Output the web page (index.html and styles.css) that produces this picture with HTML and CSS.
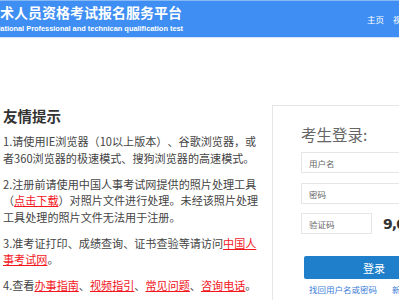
FILE: index.html
```html
<!DOCTYPE html>
<html lang="zh-CN">
<head>
	<meta charset="UTF-8">
	<meta name="viewport" content="width=device-width, initial-scale=1.0">
	<title>专业技术人员资格考试报名服务平台</title>
	<link rel="stylesheet" href="styles.css">
</head>
<body>
	<div class="header">
		<div class="brand">
			<h1 class="brandTitle">术人员资格考试报名服务平台</h1>
			<p class="brandSub">National Professional and technican qualification test</p>
		</div>
		<div class="nav">
			<a href="#">主页</a>
			<a href="#">视频指引</a>
			<a href="#">常见问题</a>
		</div>
	</div>

	<div class="main">
		<div class="tips">
			<h2>友情提示</h2>
			<p>1.请使用IE浏览器（10以上版本）、谷歌浏览器，或者360浏览器的极速模式、搜狗浏览器的高速模式。</p>
			<p>2.注册前请使用中国人事考试网提供的照片处理工具（<a href="#">点击下载</a>）对照片文件进行处理。未经该照片处理工具处理的照片文件无法用于注册。</p>
			<p>3.准考证打印、成绩查询、证书查验等请访问<a href="#">中国人事考试网</a>。</p>
			<p>4.查看<a href="#">办事指南</a>、<a href="#">视频指引</a>、<a href="#">常见问题</a>、<a href="#">咨询电话</a>。</p>
		</div>

		<div class="login">
			<h3>考生登录:</h3>
			<div class="field"><input type="text" placeholder="用户名"></div>
			<div class="field"><input type="password" placeholder="密码"></div>
			<div class="field codeRow">
				<input class="codeInput" type="text" placeholder="验证码">
				<span class="codeImg">9,6+</span>
			</div>
			<button class="loginBtn">登录</button>
			<div class="links">
				<a href="#">找回用户名或密码</a>
				<a href="#">新用户注册</a>
			</div>
		</div>
	</div>
</body>
</html>
```

FILE: styles.css
```css
*{
	padding: 0;
	margin: 0;
	box-sizing: border-box;
}
html,body{
	overflow: hidden;
}
body{
	font-family: "Noto Sans CJK SC", "Liberation Sans", sans-serif;
	color: #444;
	background: #fff;
	text-spacing-trim: space-all;
}
a{
	text-decoration: none;
}

/* 顶部蓝条 */
.header{
	display: flex;
	height: 38px;
	background-color: #3e8ef3;
	border-top: 1px solid #86b8f6;
	border-bottom: 1px solid #d3e4f9;
	white-space: nowrap;
}
.brand{
	flex: 0 0 372px;
	margin-left: -5px;
	color: #fff;
}
.brandTitle{
	font-size: 14px;
	font-weight: bold;
	line-height: 18px;
	margin-top: 2px;
	padding-left: 5px;
}
.brandSub{
	font-family: "Liberation Sans", Arial, sans-serif;
	font-size: 7.4px;
	font-weight: bold;
	line-height: 10px;
	margin-top: 3px;
}
.nav{
	display: flex;
	gap: 9px;
	padding-top: 12px;
}
.nav a{
	color: #fff;
	font-size: 8.5px;
	line-height: 12px;
}

/* 内容 */
.main{
	display: flex;
	align-items: flex-start;
}
.tips{
	flex: 0 0 263px;
	padding: 68px 0 0 3px;
	font-size: 11.1px;
	line-height: 16.5px;
}
.tips h2{
	font-size: 14.5px;
	line-height: 20px;
	color: #333;
	margin-bottom: 7px;
}
.tips p{
	margin-bottom: 9.5px;
}
.tips a{
	color: #f2161d;
	text-decoration: underline;
}

/* 登录框 */
.login{
	flex: 0 0 180px;
	margin: 67px 0 0 9px;
	padding: 17px 0 20px 28px;
	border: 1px solid #e6e6e6;
}
.login h3{
	font-size: 15.5px;
	font-weight: normal;
	line-height: 22px;
	color: #666;
	margin-bottom: 7px;
}
.field{
	margin-bottom: 10px;
}
.field input{
	display: block;
	width: 150px;
	height: 21px;
	padding: 0 7px;
	border: 1px solid #e6e6e6;
	font-family: inherit;
	font-size: 8.5px;
	outline: none;
}
.field input::placeholder{
	color: #666;
}
.codeRow{
	display: flex;
	align-items: center;
	margin-top: -1px;
}
.field .codeInput{
	width: 71px;
}
.codeImg{
	margin-left: 11px;
	font-family: "DejaVu Sans", sans-serif;
	font-size: 14px;
	font-weight: bold;
	color: #333;
	letter-spacing: -1px;
}
.loginBtn{
	display: block;
	width: 140px;
	height: 23px;
	margin: 22px 0 0 3px;
	border: 0;
	border-radius: 2px;
	background-color: #1f7fcb;
	color: #fff;
	font-family: inherit;
	font-size: 11px;
}
.links{
	display: flex;
	gap: 15px;
	margin: 4px 0 0 8px;
	white-space: nowrap;
}
.links a{
	color: #3b7dd8;
	font-size: 8.5px;
	line-height: 12px;
}
```
